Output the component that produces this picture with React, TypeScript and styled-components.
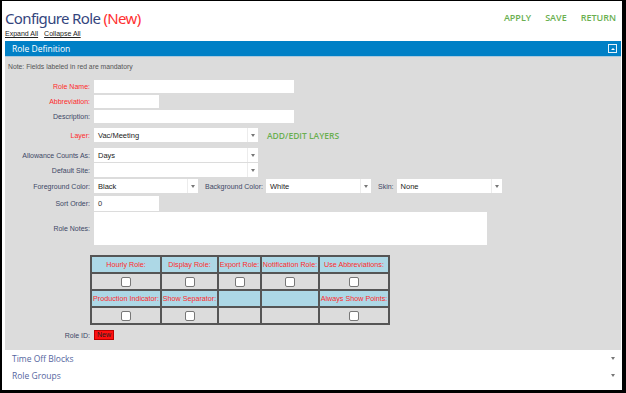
import React from "react";
import styled, { createGlobalStyle } from "styled-components";

const Global = createGlobalStyle`
  html, body { margin: 0; padding: 0; background: #fff; }
  body { width: 626px; height: 393px; overflow: hidden; font-family: "Liberation Sans", Arial, sans-serif; }
`;

const Frame = styled.div`
  box-sizing: border-box;
  width: 626px;
  height: 393px;
  border-style: solid;
  border-color: #000;
  border-width: 1px 4px 3px 2px;
  padding: 0 1px 0 3px;
  display: flex;
  flex-direction: column;
  background: #fff;
`;

const Header = styled.div`
  display: flex;
  justify-content: space-between;
  align-items: flex-start;
  height: 40px;
`;

const TitleBlock = styled.div`
  display: flex;
  flex-direction: column;
`;

const Title = styled.h1`
  margin: 6px 0 0 0;
  font-family: "Noto Sans", "Open Sans", sans-serif;
  font-weight: 400;
  font-size: 15px;
  line-height: 22px;
  color: #34457d;
  letter-spacing: -0.65px;
`;

const NewTag = styled.span`
  color: #ff3030;
`;

const Links = styled.div`
  display: flex;
  gap: 6px;
`;

const SmallLink = styled.a`
  font-size: 7px;
  color: #222;
  text-decoration: underline;
  line-height: 9px;
`;

const Actions = styled.div`
  display: flex;
  gap: 14px;
  margin: 10px 5px 0 0;
`;

const Action = styled.span`
  font-family: "Open Sans", "Noto Sans", sans-serif;
  font-size: 9px;
  font-weight: 600;
  color: #6aaf50;
`;

const SectionBar = styled.div`
  height: 15px;
  background: #0080c6;
  display: flex;
  align-items: center;
  justify-content: space-between;
  padding: 0 4px 0 7px;
  border-bottom: 1px solid #a9c9de;
`;

const SectionTitle = styled.span`
  font-family: "Open Sans", "Noto Sans", sans-serif;
  color: #fff;
  font-size: 8.5px;
`;

const CollapseBtn = styled.span`
  box-sizing: border-box;
  width: 9px;
  height: 9px;
  border: 1px solid #e6f2fa;
  display: flex;
  align-items: center;
  justify-content: center;
  &::after {
    content: "";
    width: 0;
    height: 0;
    border-left: 2px solid transparent;
    border-right: 2px solid transparent;
    border-bottom: 2px solid #fff;
  }
`;

const Panel = styled.div`
  background: #dcdcdc;
  height: 288px;
  padding: 5px 0 0 0;
  display: flex;
  flex-direction: column;
`;

const Note = styled.div`
  font-size: 6.8px;
  color: #555;
  padding-left: 3px;
  height: 10px;
  line-height: 10px;
`;

const Row = styled.div<{ $top: number }>`
  display: flex;
  align-items: center;
  margin-top: ${(p) => p.$top}px;
`;

const Label = styled.label<{ $req?: boolean }>`
  width: 85px;
  flex: none;
  text-align: right;
  font-size: 7px;
  color: ${(p) => (p.$req ? "#ff2a2a" : "#3c4766")};
  padding-right: 4px;
`;

const InlineLabel = styled.label<{ $ml: number }>`
  font-size: 7px;
  color: #3c4766;
  margin: 0 3px 0 ${(p) => p.$ml}px;
`;

const Input = styled.div<{ $w: number; $h?: number }>`
  width: ${(p) => p.$w}px;
  height: ${(p) => p.$h ?? 13}px;
  background: #fff;
  font-size: 7.5px;
  color: #333;
  display: flex;
  align-items: center;
  padding-left: 4px;
  box-sizing: border-box;
`;

const Select = styled.div<{ $w: number }>`
  width: ${(p) => p.$w}px;
  height: 14px;
  background: #fff;
  display: flex;
  box-sizing: border-box;
`;

const SelectText = styled.div`
  flex: 1;
  font-size: 7.5px;
  color: #222;
  display: flex;
  align-items: center;
  padding-left: 4px;
  border-right: 1px solid #ececec;
`;

const Caret = styled.div`
  width: 10px;
  display: flex;
  align-items: center;
  justify-content: center;
  &::after {
    content: "";
    border-left: 2.5px solid transparent;
    border-right: 2.5px solid transparent;
    border-top: 3px solid #777;
  }
`;

const AddLink = styled.span`
  font-family: "Open Sans", "Noto Sans", sans-serif;
  font-size: 8.5px;
  font-weight: 600;
  color: #6aaf50;
  margin-left: 9px;
`;

const Grid = styled.table`
  align-self: flex-start;
  table-layout: fixed;
  border-collapse: collapse;
  margin: 10px 0 0 85px;
  border: 2px solid #555;
`;

const Cell = styled.td<{ $head?: boolean; $w: number }>`
  width: ${(p) => p.$w}px;
  height: 17px;
  padding: 0;
  border: 2px solid #555;
  background: ${(p) => (p.$head ? "#add8e6" : "#dcdcdc")};
  text-align: center;
  font-size: 7.2px;
  color: #ff2a2a;
  white-space: nowrap;
  overflow: hidden;
  box-sizing: border-box;
`;

const Check = styled.span`
  display: inline-block;
  width: 8px;
  height: 8px;
  background: #fff;
  border: 1px solid #777;
  border-radius: 2px;
  vertical-align: middle;
`;

const RoleId = styled.span`
  background: #ff1010;
  color: #222;
  font-size: 7px;
  padding: 0 2px;
  height: 8px;
  line-height: 8px;
  border: 1px solid #b00;
`;

const Collapsed = styled.div`
  height: 17px;
  display: flex;
  align-items: center;
  justify-content: space-between;
  padding: 0 6px 0 7px;
  font-family: "Open Sans", "Noto Sans", sans-serif;
  font-size: 8.5px;
  color: #5566a0;
  &::after {
    content: "";
    border-left: 2.5px solid transparent;
    border-right: 2.5px solid transparent;
    border-top: 3px solid #777;
  }
`;

const cols = [70, 57, 43, 58, 70];
const heads1 = ["Hourly Role:", "Display Role:", "Export Role:", "Notification Role:", "Use Abbreviations:"];
const heads2 = ["Production Indicator:", "Show Separator:", "", "", "Always Show Points:"];
const checks2 = [true, true, false, false, true];

export default function App() {
  return (
    <>
      <Global />
      <Frame>
        <Header>
          <TitleBlock>
            <Title>
              Configure Role <NewTag>(New)</NewTag>
            </Title>
            <Links>
              <SmallLink>Expand All</SmallLink>
              <SmallLink>Collapse All</SmallLink>
            </Links>
          </TitleBlock>
          <Actions>
            <Action>APPLY</Action>
            <Action>SAVE</Action>
            <Action>RETURN</Action>
          </Actions>
        </Header>
        <SectionBar>
          <SectionTitle>Role Definition</SectionTitle>
          <CollapseBtn />
        </SectionBar>
        <Panel>
          <Note>Note: Fields labeled in red are mandatory</Note>
          <Row $top={8}>
            <Label $req>Role Name:</Label>
            <Input $w={200} />
          </Row>
          <Row $top={2}>
            <Label $req>Abbreviation:</Label>
            <Input $w={65} />
          </Row>
          <Row $top={2}>
            <Label>Description:</Label>
            <Input $w={200} />
          </Row>
          <Row $top={5}>
            <Label $req>Layer:</Label>
            <Select $w={164}>
              <SelectText>Vac/Meeting</SelectText>
              <Caret />
            </Select>
            <AddLink>ADD/EDIT LAYERS</AddLink>
          </Row>
          <Row $top={6}>
            <Label>Allowance Counts As:</Label>
            <Select $w={164}>
              <SelectText>Days</SelectText>
              <Caret />
            </Select>
          </Row>
          <Row $top={1}>
            <Label>Default Site:</Label>
            <Select $w={164}>
              <SelectText />
              <Caret />
            </Select>
          </Row>
          <Row $top={2}>
            <Label>Foreground Color:</Label>
            <Select $w={104}>
              <SelectText>Black</SelectText>
              <Caret />
            </Select>
            <InlineLabel $ml={7}>Background Color:</InlineLabel>
            <Select $w={105}>
              <SelectText>White</SelectText>
              <Caret />
            </Select>
            <InlineLabel $ml={7}>Skin:</InlineLabel>
            <Select $w={105}>
              <SelectText>None</SelectText>
              <Caret />
            </Select>
          </Row>
          <Row $top={3}>
            <Label>Sort Order:</Label>
            <Input $w={65} $h={15}>0</Input>
          </Row>
          <Row $top={1}>
            <Label>Role Notes:</Label>
            <Input $w={393} $h={33} />
          </Row>
          <Grid>
            <tbody>
              <tr>
                {heads1.map((h, i) => (
                  <Cell key={h} $head $w={cols[i]}>{h}</Cell>
                ))}
              </tr>
              <tr>
                {cols.map((w, i) => (
                  <Cell key={i} $w={w}><Check /></Cell>
                ))}
              </tr>
              <tr>
                {heads2.map((h, i) => (
                  <Cell key={i} $head $w={cols[i]}>{h}</Cell>
                ))}
              </tr>
              <tr>
                {cols.map((w, i) => (
                  <Cell key={i} $w={w}>{checks2[i] && <Check />}</Cell>
                ))}
              </tr>
            </tbody>
          </Grid>
          <Row $top={5}>
            <Label>Role ID:</Label>
            <RoleId>New</RoleId>
          </Row>
        </Panel>
        <Collapsed>Time Off Blocks</Collapsed>
        <Collapsed>Role Groups</Collapsed>
      </Frame>
    </>
  );
}
